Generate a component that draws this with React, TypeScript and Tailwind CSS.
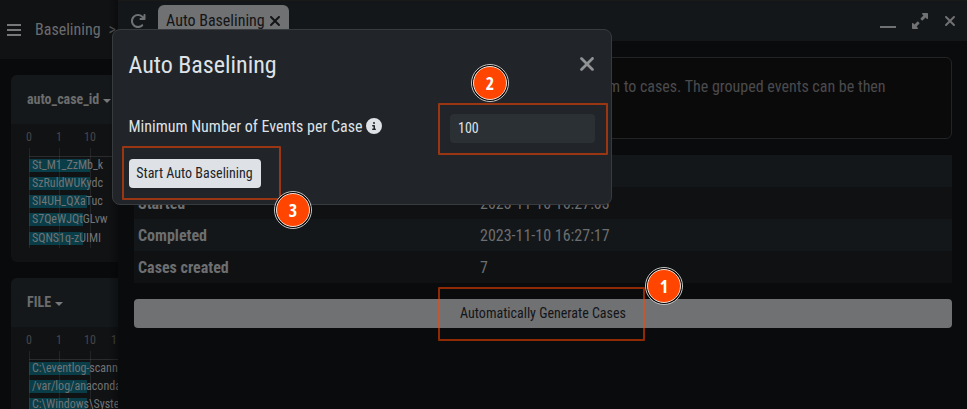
import React from 'react';
import { FaArrowRotateRight, FaCircleInfo, FaUpRightAndDownLeftFromCenter, FaXmark } from 'react-icons/fa6';

type Bar = { label: string; width: number; gap: number };

const caseBars: Bar[] = [
  { label: 'St_M1_ZzMb_k', width: 61, gap: 3 },
  { label: 'SzRuldWUKydc', width: 61, gap: 5 },
  { label: 'SI4UH_QXaTuc', width: 58, gap: 5 },
  { label: 'S7QeWJQtGLvw', width: 54, gap: 5 },
  { label: 'SQNS1q-zUIMI', width: 54, gap: 6 },
];

const fileBars: Bar[] = [
  { label: 'C:\\eventlog-scann', width: 61, gap: 3 },
  { label: '/var/log/anaconda', width: 58, gap: 5 },
  { label: 'C:\\Windows\\Syste', width: 58, gap: 5 },
];

function ChartCard({ title, bars, last }: { title: string; bars: Bar[]; last?: string }) {
  return (
    <div className="h-[187px] w-[220px] shrink-0 overflow-hidden rounded-md bg-[#111214]">
      <div className="flex h-[49px] items-center gap-1 bg-[#14181a] pl-4 text-[14px] font-bold text-[#6b6c6d]">
        <span>{title}</span>
        <span className="mt-[2px] size-0 border-x-4 border-t-4 border-x-transparent border-t-[#777879]" />
      </div>
      <div className="relative h-[24px] font-['Roboto'] text-[12px] leading-[26px] text-[#45474a]">
        <span className="absolute left-[15px]">0</span>
        <span className="absolute left-[45px]">1</span>
        <span className="absolute left-[73px]">10</span>
        <span className="absolute left-[100px]">{last}</span>
      </div>
      <div className="relative ml-[18px] h-[100px] pt-[8px]">
        <div className="border-t border-[#292b2d]">
          {bars.map((b, i) => (
            <div key={b.label} className="relative h-[13px] whitespace-nowrap pl-[3px] text-[12px] leading-[12px] text-[#717476]" style={{ marginTop: i === 0 ? 2 : b.gap }}>
              <div className="absolute left-0 top-0 h-[13px] bg-[#093d47]" style={{ width: b.width }} />
              <span className="relative">{b.label}</span>
            </div>
          ))}
        </div>
        <div className="absolute left-0 top-0 h-[100px] w-px bg-[#8080802a]" />
        <div className="absolute left-[30px] top-0 h-[100px] w-px bg-[#8080802a]" />
        <div className="absolute left-[61px] top-0 h-[100px] w-px bg-[#8080802a]" />
      </div>
    </div>
  );
}

function Row({ name, value, odd }: { name: string; value: string; odd?: boolean }) {
  return (
    <div className={`flex h-8 items-center pl-1 pt-[2px] text-[16px] text-[#6c6e70] ${odd ? 'bg-[#13171a]' : 'bg-[#101113]'}`}>
      <span className="w-[342px] font-bold">{name}</span>
      <span>{value}</span>
    </div>
  );
}

function Marker({ n, place }: { n: number; place: string }) {
  return (
    <div className={`absolute flex size-[38px] items-center justify-center rounded-full border border-[#c8c8c8] bg-black p-[1px] ${place}`}>
      <div className="flex size-full items-center justify-center rounded-full border border-[#f0e0d8] bg-[#ff4500] font-['Open_Sans'] text-[18px] font-bold text-white">{n}</div>
    </div>
  );
}

export default function App() {
  return (
    <div className="relative flex h-[409px] w-[967px] overflow-hidden bg-[#090a0c] font-['Roboto_Condensed','Roboto',sans-serif] [font-stretch:75%]">
      <aside className="relative h-full w-[118px] shrink-0 overflow-hidden">
        <div className="flex h-[59px] items-center bg-[#111214] pl-[7px] text-[16px] text-[#6b6c6e]">
          <div className="mt-[1px] flex w-[14px] flex-col gap-[3px]">
            <div className="h-[2px] bg-[#777879]" />
            <div className="h-[2px] bg-[#777879]" />
            <div className="h-[2px] bg-[#777879]" />
          </div>
          <span className="ml-[14px]">Baselining</span>
          <span className="ml-2 text-[#55575a]">&gt;</span>
        </div>
        <div className="flex flex-col gap-4 pl-[11px] pt-4">
          <ChartCard title="auto_case_id" bars={caseBars} />
          <ChartCard title="FILE" bars={fileBars} last="1" />
        </div>
        <div className="absolute inset-y-0 right-0 w-[10px] bg-linear-to-r from-transparent to-black/30" />
      </aside>
      <main className="h-full w-[849px] shrink-0 bg-[#0a0b0d]">
        <header className="flex h-[41px] items-start border-t border-[#191918] bg-[#13171a] text-[#707173]">
          <FaArrowRotateRight className="ml-[12px] mt-[12px] size-4" />
          <div className="ml-3 mt-1 flex h-9 w-[131px] items-start rounded-t-md bg-[#707173] pl-2 pt-[4px] text-[16px] text-[#131416]">
            Auto Baselining
            <FaXmark className="ml-[2px] mt-[4px] size-4" />
          </div>
          <div className="grow" />
          <div className="mt-[25px] h-[2px] w-4 bg-[#707173]" />
          <FaUpRightAndDownLeftFromCenter className="ml-4 mt-[12px] size-4" />
          <FaXmark className="ml-[14px] mr-[9px] mt-[12px] size-4" />
        </header>
        <div className="px-4 pt-4">
          <div className="flex h-[82px] w-[818px] justify-end rounded-md border border-[#222426] bg-[#0a0a0b] pr-[65.4px] pt-[17px] text-[16px] text-[#4a4b4d]">
            them to cases. The grouped events can be then
          </div>
          <div className="mt-4 w-[818px]">
            <Row name="" value="" odd />
            <Row name="Started" value="2023-11-10 16:27:03" />
            <Row name="Completed" value="2023-11-10 16:27:17" odd />
            <Row name="Cases created" value="7" />
          </div>
          <button className="mt-4 block h-[29px] w-[818px] rounded bg-[#707173] text-center text-[14px] text-[#131416]">Automatically Generate Cases</button>
        </div>
      </main>

      <section className="absolute left-[112px] top-[29px] h-[176px] w-[500px] rounded-lg border border-[#383b3e] bg-[#212429] pl-[15.5px] pr-4 text-[#dee2e6]">
        <div className="flex h-[70px] items-center justify-between">
          <h1 className="text-[24px]">Auto Baselining</h1>
          <FaXmark className="mr-[-3px] mt-[-2px] size-[22px] text-[#909294]" />
        </div>
        <div className="mt-[14px] flex h-[29px] items-center text-[16px]">
          <span className="mt-[-4px]">Minimum Number of Events per Case</span>
          <FaCircleInfo className="ml-[3px] mt-[-5px] size-4" />
          <div className="ml-auto flex h-[29px] w-[145px] items-center rounded bg-[#2b3035] pl-2 text-[14px]">100</div>
        </div>
        <button className="mt-[16px] h-[29px] w-[132px] rounded bg-[#dee2e6] text-[14px] text-[#212529]">Start Auto Baselining</button>
      </section>

      <div className="absolute left-[438px] top-[103px] h-[52px] w-[170px] rounded-[1px] border-2 border-[#ff45008c]" />
      <div className="absolute left-[122px] top-[146px] h-[54px] w-[159px] rounded-[1px] border-2 border-[#ff45008c]" />
      <div className="absolute left-[438px] top-[287px] h-[54px] w-[207px] rounded-[1px] border-2 border-[#ff45008c]" />
      <Marker n={1} place="left-[645px] top-[267px]" />
      <Marker n={2} place="left-[471px] top-[64px]" />
      <Marker n={3} place="left-[274px] top-[191px]" />
    </div>
  );
}
